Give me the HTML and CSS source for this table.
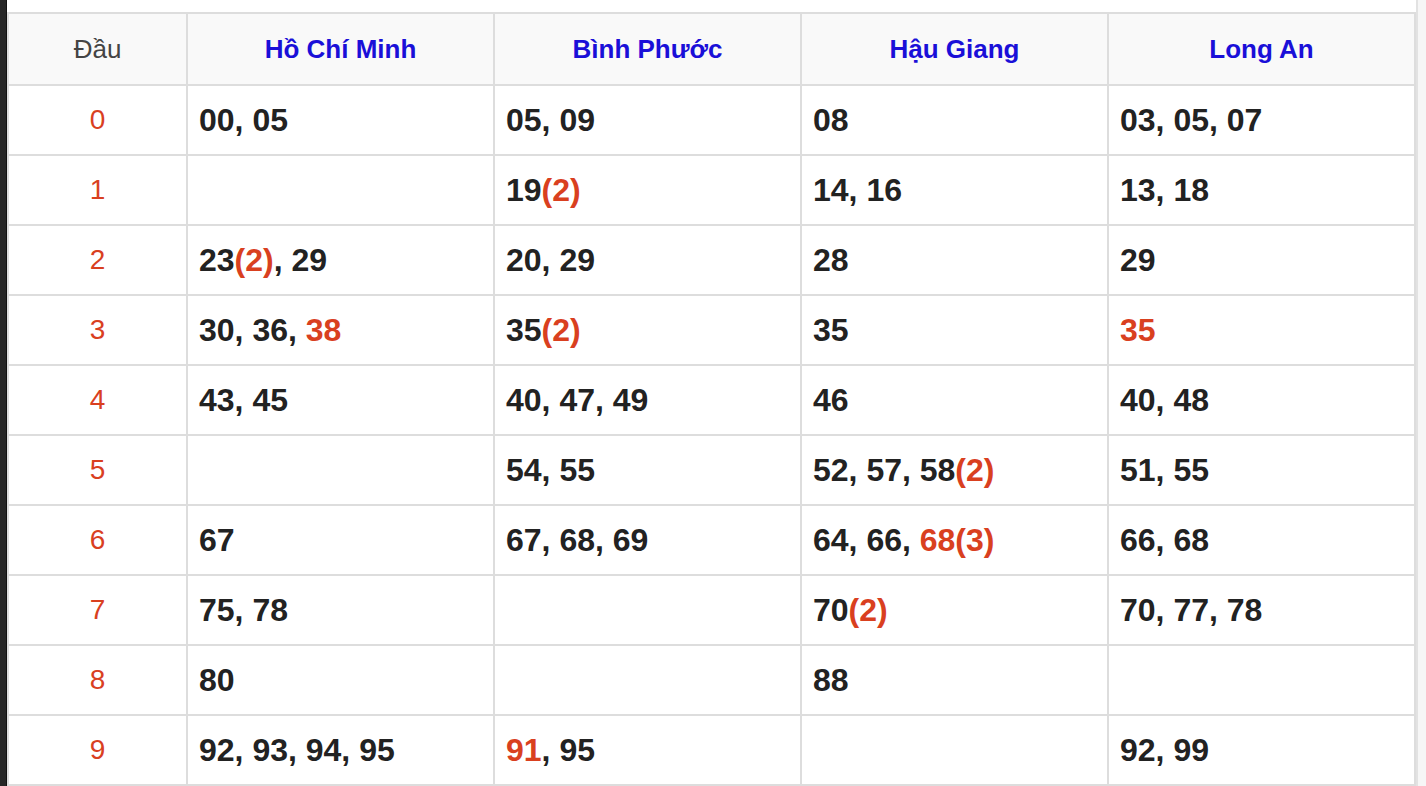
FILE: index.html
```html
<!DOCTYPE html>
<html lang="vi">
<head>
<meta charset="utf-8">
<title>Thống kê lô tô</title>
<link rel="stylesheet" href="styles.css">
</head>
<body>
<div class="page">
  <div class="edge"></div>
  <div class="main">
    <table class="loto">
      <thead>
        <tr>
          <th class="dau-h">Đầu</th>
          <th>Hồ Chí Minh</th>
          <th>Bình Phước</th>
          <th>Hậu Giang</th>
          <th>Long An</th>
        </tr>
      </thead>
      <tbody>
        <tr><td class="dau">0</td><td>00, 05</td><td>05, 09</td><td>08</td><td>03, 05, 07</td></tr>
        <tr><td class="dau">1</td><td></td><td>19<span class="hot">(2)</span></td><td>14, 16</td><td>13, 18</td></tr>
        <tr><td class="dau">2</td><td>23<span class="hot">(2)</span>, 29</td><td>20, 29</td><td>28</td><td>29</td></tr>
        <tr><td class="dau">3</td><td>30, 36, <span class="hot">38</span></td><td>35<span class="hot">(2)</span></td><td>35</td><td><span class="hot">35</span></td></tr>
        <tr><td class="dau">4</td><td>43, 45</td><td>40, 47, 49</td><td>46</td><td>40, 48</td></tr>
        <tr><td class="dau">5</td><td></td><td>54, 55</td><td>52, 57, 58<span class="hot">(2)</span></td><td>51, 55</td></tr>
        <tr><td class="dau">6</td><td>67</td><td>67, 68, 69</td><td>64, 66, <span class="hot">68(3)</span></td><td>66, 68</td></tr>
        <tr><td class="dau">7</td><td>75, 78</td><td></td><td>70<span class="hot">(2)</span></td><td>70, 77, 78</td></tr>
        <tr><td class="dau">8</td><td>80</td><td></td><td>88</td><td></td></tr>
        <tr><td class="dau">9</td><td>92, 93, 94, 95</td><td><span class="hot">91</span>, 95</td><td></td><td>92, 99</td></tr>
      </tbody>
    </table>
  </div>
  <div class="rail"></div>
</div>
</body>
</html>
```
FILE: styles.css
```css
html, body {
  margin: 0;
  padding: 0;
  background: #ffffff;
}

.page {
  display: flex;
  width: 1426px;
  height: 786px;
  overflow: hidden;
  font-family: "Liberation Sans", Arial, sans-serif;
}

.edge {
  width: 6px;
  flex: none;
  background: #262626;
  border-right: 1px solid #111;
}

.main {
  flex: none;
  width: 1409px;
  padding-top: 12px;
}

.rail {
  flex: 1;
  background: #f6f6f6;
  border-left: 2px solid #e2e2e2;
}

.loto {
  width: 1409px;
  border-collapse: collapse;
  table-layout: fixed;
  border: 2px solid #dddddd;
}

.loto th,
.loto td {
  border: 2px solid #dddddd;
  padding: 0 0 0 11px;
  text-align: left;
}

.loto th {
  height: 70px;
  background: #f9f9f9;
  color: #1a0fd8;
  font-size: 26px;
  font-weight: bold;
  text-align: center;
  padding: 0;
}

.loto th.dau-h {
  width: 177px;
  color: #444444;
  font-weight: normal;
}

.loto td {
  height: 68px;
  font-size: 32px;
  font-weight: bold;
  color: #222222;
}

.loto td.dau {
  text-align: center;
  padding: 0;
  font-weight: normal;
  font-size: 28px;
  color: #d9401f;
}

.hot {
  color: #d9401f;
}
```
